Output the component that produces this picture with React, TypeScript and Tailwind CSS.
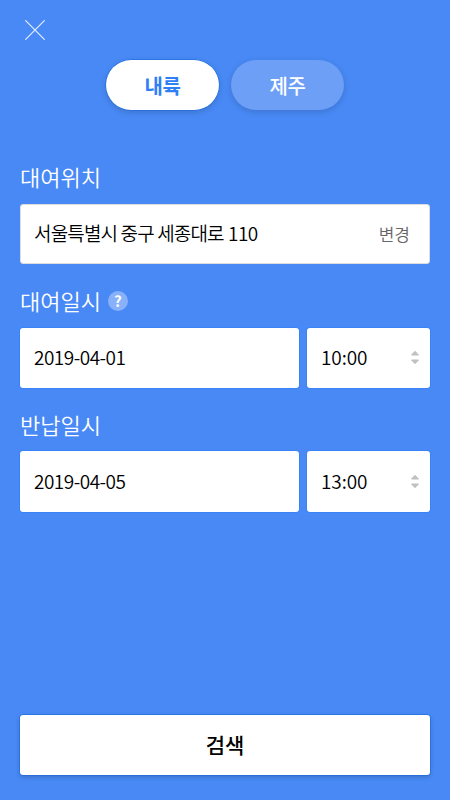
import React, { useState } from 'react';

interface DateTimeField {
  label: string;
  date: string;
  time: string;
  help?: boolean;
}

const regions = ['내륙', '제주'];

const fields: DateTimeField[] = [
  { label: '대여일시', date: '2019-04-01', time: '10:00', help: true },
  { label: '반납일시', date: '2019-04-05', time: '13:00' },
];

const SortArrows = () => (
  <svg width="10" height="15" viewBox="0 0 10 15" className="text-[#c0c0c0]" fill="currentColor" stroke="currentColor" strokeLinejoin="round">
    <path d="M5 1.3 8.5 5H1.5Z" />
    <path d="M5 13.7 1.5 10h7Z" />
  </svg>
);

const App = () => {
  const [region, setRegion] = useState('내륙');

  return (
    <main className="flex h-[800px] w-[450px] flex-col bg-[#4889f5] px-5 pb-[25px] font-['Noto_Sans_CJK_KR',sans-serif]">
      <header className="h-[60px] pt-5 pl-[5px]">
        <button aria-label="닫기" className="block">
          <svg width="20" height="20" viewBox="0 0 20 20" fill="none" stroke="white" strokeOpacity="0.85" strokeWidth="1.2">
            <path d="M.3.3l19.4 19.4M19.7.3L.3 19.7" />
          </svg>
        </button>
      </header>

      <div className="flex justify-center gap-3">
        {regions.map((name) => (
          <button
            key={name}
            onClick={() => setRegion(name)}
            className={`h-[50px] w-[113px] rounded-full pt-px text-[20px] tracking-[-0.5px] ${
              region === name
                ? 'bg-white font-bold text-[#2f7ff5] shadow-[0_0_0_0.5px_#1468e0,0_2px_6px_rgba(0,0,0,0.18)]'
                : 'bg-[#6d9ff7] font-medium text-white shadow-[0_2px_6px_rgba(0,0,0,0.15)]'
            }`}
          >
            {name}
          </button>
        ))}
      </div>

      <section className="mt-[49px]">
        <h2 className="h-[44.5px] text-[22px] leading-[34px] font-[350] text-white">대여위치</h2>
        <div className="flex h-[60.5px] items-center justify-between rounded-[3px] border border-[#dcdcdc] bg-white pr-[19px] pb-px pl-[13px]">
          <span className="text-[19px] font-[350] tracking-[-0.85px] text-black">
            서울특별시 중구 세종대로 <span className="ml-px tracking-[-0.6px]">110</span>
          </span>
          <button className="text-[17px] font-[350] text-[#666]">변경</button>
        </div>
      </section>

      {fields.map((field) => (
        <section key={field.label} className="mt-[19px]">
          <div className="flex h-[44.5px] items-start">
            <h2 className="text-[22px] leading-[34px] font-[350] text-white">{field.label}</h2>
            {field.help && (
              <span className="mt-[7.5px] ml-[7px] flex h-5 w-5 items-center justify-center rounded-full bg-[#89b1f9] pt-px text-[15px] font-bold text-white">?</span>
            )}
          </div>
          <div className="flex gap-2">
            <div className="flex h-[60.3px] w-[279px] items-center rounded-[3px] bg-white pl-[14px] text-[19px] font-[350] tracking-[-0.5px] shadow-[0_0_0_0.5px_rgba(0,110,255,0.4)]">
              {field.date}
            </div>
            <div className="flex h-[60.3px] flex-1 items-center justify-between rounded-[3px] bg-white pr-[10px] pl-[14px] text-[19px] font-[350] tracking-[-0.1px] shadow-[0_0_0_0.5px_rgba(0,110,255,0.4)]">
              {field.time}
              <SortArrows />
            </div>
          </div>
        </section>
      ))}

      <button className="mt-auto h-[60px] rounded-[3px] bg-white text-[21px] font-medium text-black shadow-[0_0_0_0.5px_#1468e0,0_2px_5px_rgba(0,0,0,0.2)]">
        검색
      </button>
    </main>
  );
};

export default App;
